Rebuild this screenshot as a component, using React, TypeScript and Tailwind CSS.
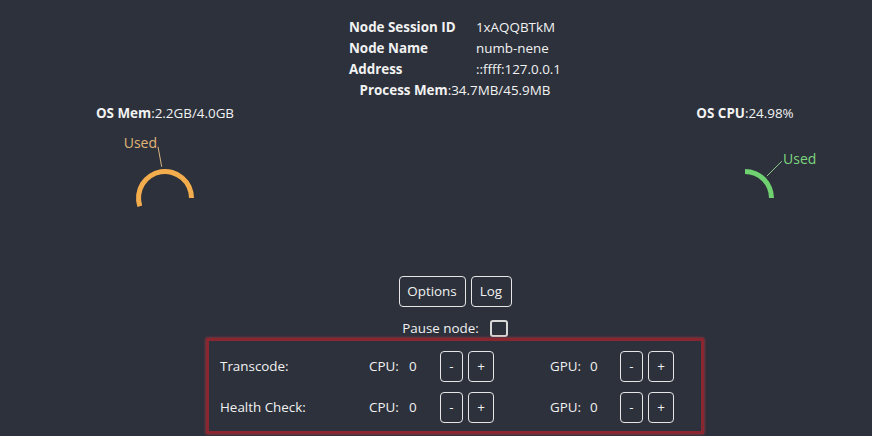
import React from 'react';

const nodeInfo = [
  { label: 'Node Session ID', value: '1xAQQBTkM' },
  { label: 'Node Name', value: 'numb-nene' },
  { label: 'Address', value: '::ffff:127.0.0.1' },
];

const workers = [
  { name: 'Transcode:', cpu: 0, gpu: 0 },
  { name: 'Health Check:', cpu: 0, gpu: 0 },
];

const UsedPie = ({ kind }: { kind: 'mem' | 'cpu' }) => {
  if (kind === 'mem') {
    return (
      <svg width="290" height="100" viewBox="0 0 290 100">
        <path
          d="M174 75 A29 29 0 1 0 117.42 83.96 L122.17 82.42 A24 24 0 1 1 169 75 Z"
          fill="#f4ad4d"
        />
        <path d="M141.7 43.7 L138 23.7" stroke="#d9b482" strokeWidth="1" fill="none" />
        <text x="137" y="25" textAnchor="end" fill="#e0b57a" fontSize="14">
          Used
        </text>
      </svg>
    );
  }
  return (
    <svg width="290" height="100" viewBox="0 0 290 100">
      <path d="M174 75 A29 29 0 0 0 145 46 L145 51 A24 24 0 0 1 169 75 Z" fill="#6fd16f" />
      <path d="M166.9 53.1 L181.8 38.2" stroke="#8fc98f" strokeWidth="1" fill="none" />
      <text x="183" y="41" textAnchor="start" fill="#7fd57f" fontSize="14">
        Used
      </text>
    </svg>
  );
};

const SmallButton = ({ label, width }: { label: string; width: string }) => (
  <button className={`h-[31px] ${width} rounded-[4px] border border-[#e6e6e6] text-[13.4px] leading-none`}>
    {label}
  </button>
);

const App: React.FC = () => {
  return (
    <div className="w-[872px] h-[436px] overflow-hidden bg-[#2c313b] text-[#f2f2f2] font-['Open_Sans',sans-serif] text-[13.4px]">
      <div className="flex h-[276px] pl-[20px] pt-[17px]">
        <div className="w-[290px] shrink-0 pt-[86px] flex flex-col items-center">
          <div className="leading-[20px]">
            <span className="font-bold">OS Mem</span>:2.2GB/4.0GB
          </div>
          <UsedPie kind="mem" />
        </div>

        <div className="w-[290px] shrink-0 flex flex-col items-center">
          <table>
            <tbody>
              {nodeInfo.map((row) => (
                <tr key={row.label} className="leading-[21px]">
                  <td className="font-bold w-[127px] p-0">{row.label}</td>
                  <td className="p-0">{row.value}</td>
                </tr>
              ))}
            </tbody>
          </table>
          <div className="leading-[21px]">
            <span className="font-bold">Process Mem</span>:34.7MB/45.9MB
          </div>
        </div>

        <div className="w-[290px] shrink-0 pt-[86px] flex flex-col items-center">
          <div className="leading-[20px]">
            <span className="font-bold">OS CPU</span>:24.98%
          </div>
          <UsedPie kind="cpu" />
        </div>
      </div>

      <div className="w-[870px] ml-[20px] flex flex-col items-center">
        <div className="flex gap-[5px]">
          <button className="h-[31px] w-[67px] rounded-[4px] border border-[#e6e6e6]">Options</button>
          <button className="h-[31px] w-[41px] rounded-[4px] border border-[#e6e6e6]">Log</button>
        </div>
        <div className="flex items-center mt-[13px] h-[17px]">
          <span>Pause node:</span>
          <span className="ml-[11px] w-[18px] h-[17px] rounded-[3px] border-2 border-[#d8d8d8]" />
        </div>

        <div className="mt-[1px] w-[498px] h-[96px] border-[3px] border-[#8a2630] shadow-[0_0_3px_#b03a44] pl-[11px] pt-[10px] flex flex-col gap-[10px]">
          {workers.map((w) => (
            <div key={w.name} className="flex items-center h-[31px]">
              <span className="w-[149px]">{w.name}</span>
              <span className="w-[40px]">CPU:</span>
              <span className="w-[31px]">{w.cpu}</span>
              <div className="flex gap-[5px] w-[110px]">
                <SmallButton label="-" width="w-[23px]" />
                <SmallButton label="+" width="w-[26px]" />
              </div>
              <span className="w-[40px]">GPU:</span>
              <span className="w-[30px]">{w.gpu}</span>
              <div className="flex gap-[5px]">
                <SmallButton label="-" width="w-[23px]" />
                <SmallButton label="+" width="w-[26px]" />
              </div>
            </div>
          ))}
        </div>
      </div>
    </div>
  );
};

export default App;
